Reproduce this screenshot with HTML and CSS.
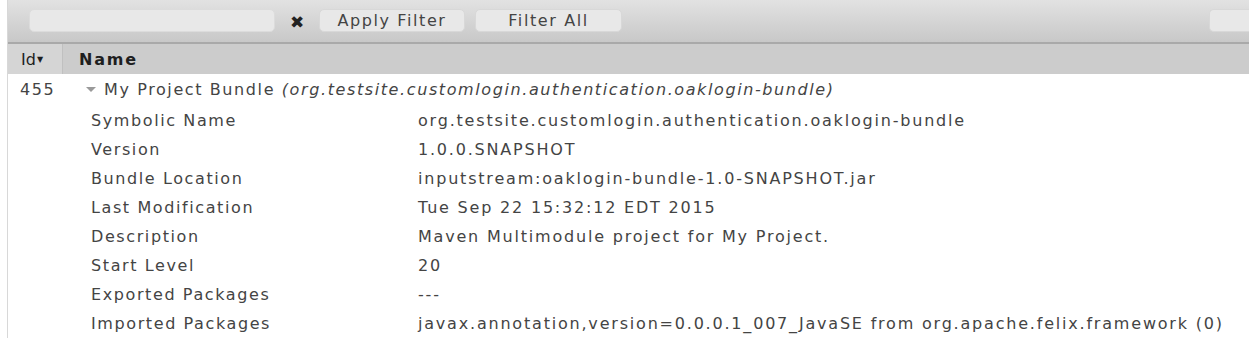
FILE: index.html
```html
<!DOCTYPE html>
<html lang="en">
<head>
    <meta charset="UTF-8">
    <title>Bundles</title>
    <link rel="stylesheet" href="styles.css">
</head>
<body>
    <div class="panel">
        <div class="toolbar">
            <input class="filter-input" type="text">
            <span class="clear">&#10006;</span>
            <button class="btn btn-apply">Apply Filter</button>
            <button class="btn btn-all">Filter All</button>
            <span class="spacer"></span>
            <button class="btn btn-right"></button>
        </div>
        <div class="head-row">
            <div class="col-id">Id<span class="sort">&#9660;</span></div>
            <div class="col-name">Name</div>
        </div>
        <div class="bundle-row">
            <div class="col-id">455</div>
            <div class="col-name"><span class="toggle"></span>My Project Bundle <em>(org.testsite.customlogin.authentication.oaklogin-bundle)</em></div>
        </div>
        <div class="details">
            <div class="label">Symbolic Name</div><div class="value">org.testsite.customlogin.authentication.oaklogin-bundle</div>
            <div class="label">Version</div><div class="value">1.0.0.SNAPSHOT</div>
            <div class="label">Bundle Location</div><div class="value">inputstream:oaklogin-bundle-1.0-SNAPSHOT.jar</div>
            <div class="label">Last Modification</div><div class="value">Tue Sep 22 15:32:12 EDT 2015</div>
            <div class="label">Description</div><div class="value">Maven Multimodule project for My Project.</div>
            <div class="label">Start Level</div><div class="value">20</div>
            <div class="label">Exported Packages</div><div class="value">---</div>
            <div class="label">Imported Packages</div><div class="value">javax.annotation,version=0.0.0.1_007_JavaSE from org.apache.felix.framework (0)</div>
        </div>
    </div>
</body>
</html>
```

FILE: styles.css
```css
* {
    box-sizing: border-box;
}
html, body {
    margin: 0;
    background: #ffffff;
}
body {
    font-family: "DejaVu Sans", Verdana, sans-serif;
    font-size: 16px;
    letter-spacing: 1.6px;
    color: #444444;
    overflow: hidden;
}
.panel {
    margin-left: 7px;
    border-left: 1px solid #d8d8d8;
    min-height: 338px;
}
.toolbar {
    height: 44px;
    display: flex;
    align-items: center;
    padding: 0 0 2px 21px;
    background: linear-gradient(#e2e2e2, #c8c8c8);
    border-bottom: 2px solid #a9a9a9;
}
.filter-input {
    width: 246px;
    height: 23px;
    border: 1px solid #dcdcdc;
    border-radius: 5px;
    background: #e8e8e8;
    margin: 0;
}
.clear {
    width: 44px;
    text-align: center;
    font-size: 17px;
    letter-spacing: 0;
    color: #222222;
    margin-top: 4px;
}
.btn {
    height: 23px;
    border: 1px solid #d8d8d8;
    border-radius: 5px;
    background: #e8e8e8;
    font-family: inherit;
    font-size: 16px;
    letter-spacing: 1.6px;
    color: #444444;
    padding: 0;
    margin: 0;
}
.btn-apply {
    width: 146px;
}
.btn-all {
    width: 147px;
    margin-left: 10px;
}
.spacer {
    flex: 1;
}
.btn-right {
    width: 40px;
    border-right: none;
    border-radius: 5px 0 0 5px;
}
.head-row {
    display: flex;
    height: 30px;
    background: #cccccc;
    color: #1e1e1e;
}
.head-row .col-id {
    background: #d5d5d5;
    border-right: 1px solid #c0c0c0;
    display: flex;
    align-items: center;
    padding-left: 13px;
    letter-spacing: 0;
}
.sort {
    font-size: 8px;
    margin-left: 1px;
}
.head-row .col-name {
    display: flex;
    align-items: center;
    padding-left: 16px;
    font-weight: bold;
    letter-spacing: 1.8px;
}
.col-id {
    width: 55px;
    flex: none;
}
.bundle-row {
    display: flex;
    height: 31px;
    padding-bottom: 1px;
    align-items: center;
}
.bundle-row .col-id {
    padding-left: 12px;
}
.toggle {
    display: inline-block;
    width: 0;
    height: 0;
    border-left: 5px solid transparent;
    border-right: 5px solid transparent;
    border-top: 5px solid #9a9a9a;
    margin: 0 8px 0 23px;
    vertical-align: 3px;
}
.details {
    display: grid;
    grid-template-columns: 327px 1fr;
    grid-auto-rows: 29px;
    align-items: center;
    padding-top: 1px;
    padding-left: 83px;
    white-space: nowrap;
}
.value {
    letter-spacing: 1.8px;
}
```
